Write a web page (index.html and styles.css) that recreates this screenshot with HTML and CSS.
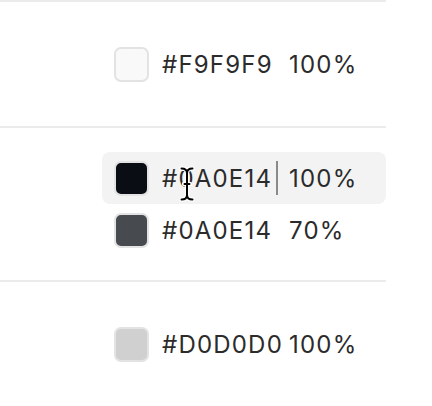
FILE: index.html
```html
<!DOCTYPE html>
<html>
<head>
<meta charset="utf-8">
<link rel="stylesheet" href="styles.css">
</head>
<body>
<div class="panel">
  <div class="divider"></div>
  <section class="group">
    <div class="row">
      <span class="swatch sw-f9"></span>
      <span class="hex">#F9F9F9</span>
      <span class="pct">100%</span>
    </div>
  </section>
  <div class="divider"></div>
  <section class="group">
    <div class="row active">
      <span class="swatch sw-0a"></span>
      <span class="hex">#0A0E14<span class="caret"></span></span>
      <span class="pct">100%</span>
      <svg class="ibeam" width="16" height="36" viewBox="0 0 16 36">
        <path d="M2.5 2.5 C6 2.5 8 3.5 8 7 C8 3.5 10 2.5 13.5 2.5 M8 7 V29 M2.5 33.5 C6 33.5 8 32.5 8 29 C8 32.5 10 33.5 13.5 33.5 M5 18 H11" fill="none" stroke="#fff" stroke-width="4.5" stroke-linecap="round"/>
        <path d="M2.5 2.5 C6 2.5 8 3.5 8 7 C8 3.5 10 2.5 13.5 2.5 M8 7 V29 M2.5 33.5 C6 33.5 8 32.5 8 29 C8 32.5 10 33.5 13.5 33.5 M5.5 18 H10.5" fill="none" stroke="#000" stroke-width="2" stroke-linecap="round"/>
      </svg>
    </div>
    <div class="row">
      <span class="swatch sw-0a70"></span>
      <span class="hex">#0A0E14</span>
      <span class="pct">70%</span>
    </div>
  </section>
  <div class="divider"></div>
  <section class="group">
    <div class="row">
      <span class="swatch sw-d0"></span>
      <span class="hex">#D0D0D0</span>
      <span class="pct">100%</span>
    </div>
  </section>
</div>
</body>
</html>
```

FILE: styles.css
```css
html, body {
  margin: 0;
  padding: 0;
  background: #fff;
}
body {
  font-family: Inter, "Noto Sans", sans-serif;
  color: #2b2b2b;
}
.panel {
  width: 386px;
  display: flex;
  flex-direction: column;
}
.divider {
  height: 2px;
  background: #ebebeb;
}
.group {
  box-sizing: border-box;
  min-height: 124px;
  padding: 24px 0;
  display: flex;
  flex-direction: column;
  justify-content: center;
}
.row {
  position: relative;
  margin-left: 102px;
  height: 52px;
  padding-left: 12px;
  display: flex;
  align-items: center;
  border-radius: 8px;
  font-size: 24px;
  letter-spacing: 1.2px;
}
.row.active {
  background: #f3f3f3;
}
.swatch {
  box-sizing: border-box;
  width: 35px;
  height: 35px;
  border-radius: 7px;
  border: 2px solid #e3e3e3;
  flex: none;
}
.sw-f9 { background: #f9f9f9; }
.sw-0a { background: #0a0e14; }
.sw-0a70 { background: rgba(10, 14, 20, 0.75); }
.sw-d0 { background: #d0d0d0; }
.hex {
  margin-left: 13px;
  width: 127px;
  flex: none;
  display: flex;
  align-items: center;
  white-space: nowrap;
}
.caret {
  width: 1.5px;
  height: 34px;
  background: #8a8a8a;
  margin-left: 4px;
}
.pct {
  white-space: nowrap;
}
.ibeam {
  position: absolute;
  left: 77px;
  top: 14px;
}
```
